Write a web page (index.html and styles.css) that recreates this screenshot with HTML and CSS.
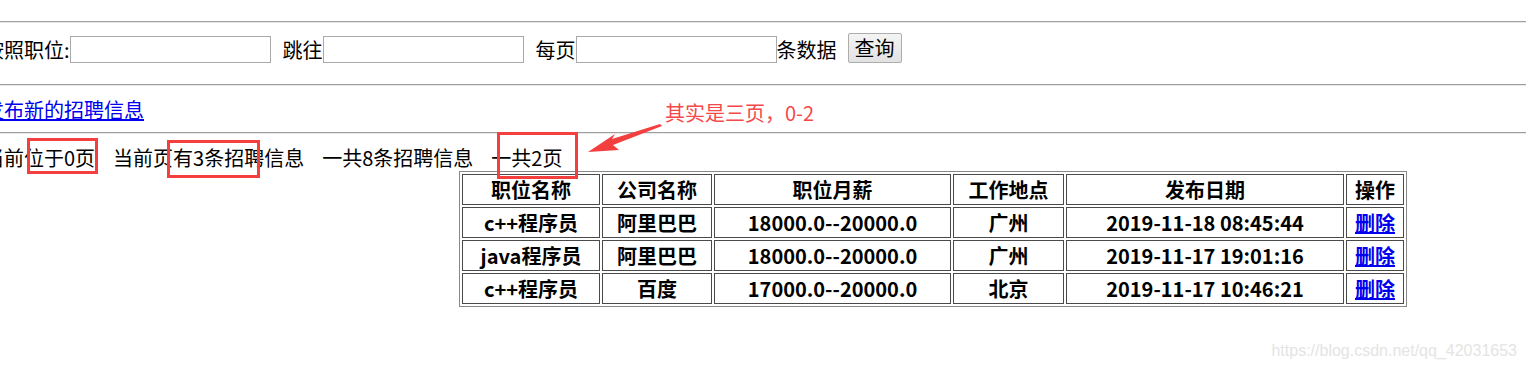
FILE: index.html
```html
<!DOCTYPE html>
<html lang="zh-CN">
<head>
    <meta charset="UTF-8">
    <meta name="viewport" content="width=device-width, initial-scale=1.0">
    <title>招聘信息</title>
    <link rel="stylesheet" href="styles.css">
</head>
<body>
    <hr>
    <form class="search-bar" onsubmit="return false">
        <span>按照职位:</span><input type="text" id="jobName">
        <span class="gap">跳往</span><input type="text" id="pageNo">
        <span class="gap">每页</span><input type="text" id="pageSize"><span>条数据</span>
        <button type="submit">查询</button>
    </form>
    <hr>
    <div class="link-row"><a href="#">发布新的招聘信息</a></div>
    <hr>
    <div class="page-info">
        <span>当前位于0页</span>
        <span>当前页有3条招聘信息</span>
        <span>一共8条招聘信息</span>
        <span>一共2页</span>
    </div>
    <table class="job-table">
        <tr>
            <td class="c1">职位名称</td>
            <td class="c2">公司名称</td>
            <td class="c3">职位月薪</td>
            <td class="c4">工作地点</td>
            <td class="c5">发布日期</td>
            <td class="c6">操作</td>
        </tr>
        <tr>
            <td>c++程序员</td>
            <td>阿里巴巴</td>
            <td>18000.0--20000.0</td>
            <td>广州</td>
            <td>2019-11-18 08:45:44</td>
            <td><a href="#">删除</a></td>
        </tr>
        <tr>
            <td>java程序员</td>
            <td>阿里巴巴</td>
            <td>18000.0--20000.0</td>
            <td>广州</td>
            <td>2019-11-17 19:01:16</td>
            <td><a href="#">删除</a></td>
        </tr>
        <tr>
            <td>c++程序员</td>
            <td>百度</td>
            <td>17000.0--20000.0</td>
            <td>北京</td>
            <td>2019-11-17 10:46:21</td>
            <td><a href="#">删除</a></td>
        </tr>
    </table>

    <!-- screenshot annotations -->
    <svg class="marks" width="1526" height="371" viewBox="0 0 1526 371">
        <rect x="28.5" y="139.5" width="68" height="33" fill="none" stroke="#f43f3f" stroke-width="3"/>
        <rect x="168.5" y="141.5" width="90" height="35" fill="none" stroke="#f43f3f" stroke-width="3"/>
        <rect x="498.5" y="133.5" width="78" height="44" fill="none" stroke="#f43f3f" stroke-width="3"/>
        <polygon points="660,124 612,139 615,134 588,152 619,150 613,145 662,126" fill="#f43f3f"/>
    </svg>
    <div class="note">其实是三页，0-2</div>
    <div class="watermark">https://blog.csdn.net/qq_42031653</div>
</body>
</html>
```

FILE: styles.css
```css
body {
    margin: 0;
    font-family: "Noto Sans CJK SC", "Noto Sans", sans-serif;
    font-size: 20px;
    color: #000;
    background: #fff;
    position: relative;
    height: 371px;
    overflow: hidden;
}
hr {
    margin: 0;
    border: 0;
    border-top: 1px solid #a0a0a0;
    border-bottom: 1px solid #e8e8e8;
}
body > hr:first-child {
    margin-top: 21px;
}
.search-bar {
    display: flex;
    align-items: flex-end;
    height: 30px;
    margin: 10px 0 21px -16px;
}
.search-bar span {
    line-height: 27px;
    white-space: nowrap;
}
.search-bar .gap {
    margin-left: 12px;
}
.search-bar input {
    box-sizing: border-box;
    width: 201px;
    height: 27px;
    margin: 0;
    border: 1px solid #a9a9a9;
    font-size: 16px;
}
.search-bar button {
    box-sizing: border-box;
    width: 54px;
    height: 30px;
    margin: 0 0 0 11px;
    padding: 0;
    border: 1px solid #adadad;
    border-radius: 2px;
    background: linear-gradient(#f4f4f4, #e2e2e2);
    font-family: inherit;
    font-size: 20px;
    line-height: 26px;
}
.link-row {
    margin: 10px 0 8px -16px;
    line-height: 28px;
}
a {
    color: #0000ee;
}
.page-info {
    display: flex;
    gap: 18px;
    margin: 11px 0 0 -16px;
    line-height: 26px;
    white-space: nowrap;
}
.job-table {
    margin-left: 459px;
    width: 948px;
    table-layout: fixed;
    border-collapse: separate;
    border-spacing: 2px;
    border: 1px solid #888;
    font-weight: bold;
}
.job-table td {
    box-sizing: border-box;
    height: 31px;
    padding: 0;
    border: 1px solid #4a4a4a;
    text-align: center;
    line-height: 29px;
    white-space: nowrap;
}
.job-table .c1 { width: 138px; }
.job-table .c2 { width: 110px; }
.job-table .c3 { width: 237px; }
.job-table .c4 { width: 111px; }
.job-table .c5 { width: 278px; }
.job-table .c6 { width: 58px; }
.marks {
    position: absolute;
    left: 0;
    top: 0;
    pointer-events: none;
}
.note {
    position: absolute;
    left: 665px;
    top: 99px;
    color: #f5484b;
    font-size: 20px;
    line-height: 28px;
    white-space: nowrap;
}
.watermark {
    position: absolute;
    right: 9px;
    top: 342px;
    font-family: "Liberation Sans", Arial, sans-serif;
    font-size: 16px;
    color: #e4e4e4;
}
```
